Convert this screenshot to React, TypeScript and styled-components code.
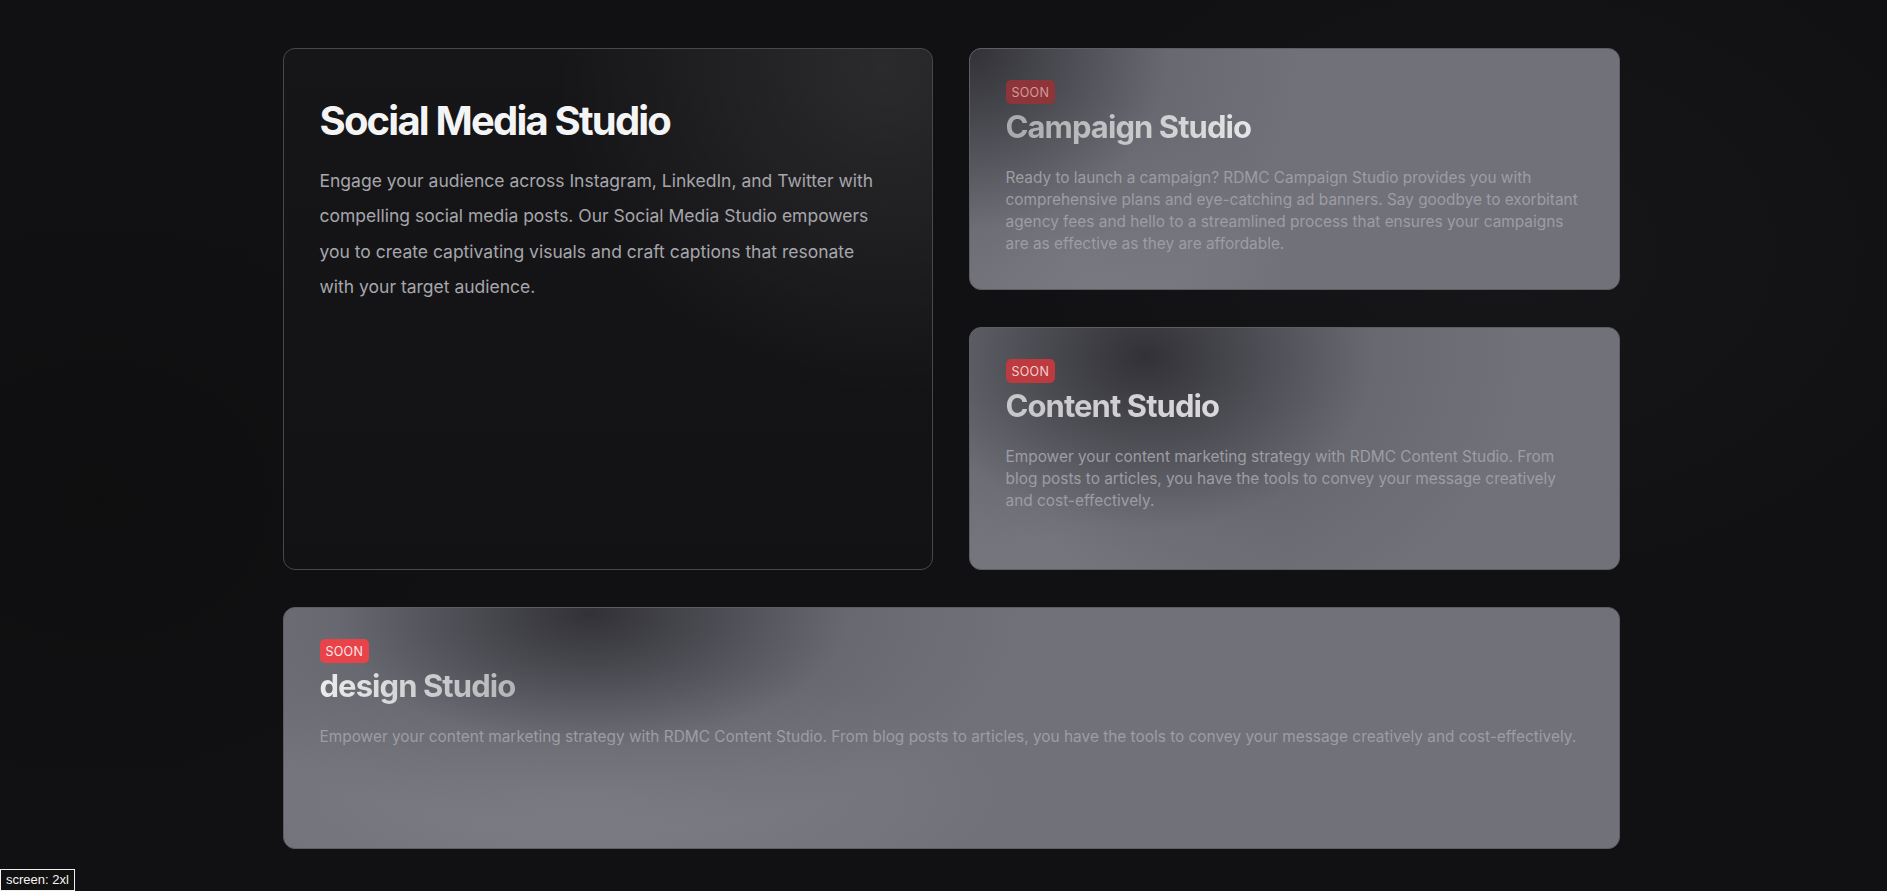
import React from "react";
import styled, { createGlobalStyle } from "styled-components";

const GlobalStyle = createGlobalStyle`
  html, body { margin: 0; padding: 0; }
  body {
    background: #111113;
    font-family: Inter, "Noto Sans", sans-serif;
    -webkit-font-smoothing: antialiased;
  }
  * { box-sizing: border-box; }
`;

const Page = styled.main`
  min-height: 891px;
  padding-top: 48px;
  background:
    radial-gradient(ellipse 700px 500px at 1500px 250px, rgba(255,255,255,0.025), rgba(255,255,255,0) 70%),
    radial-gradient(ellipse 600px 500px at 100px 500px, rgba(0,0,0,0.15), rgba(0,0,0,0) 70%),
    #111113;
`;

const Wrapper = styled.div`
  max-width: 1352px;
  margin: 0 auto;
  padding-left: 15px;
`;

const Grid = styled.div`
  display: grid;
  grid-template-columns: 650px 651px;
  grid-template-rows: 242px 243px 242px;
  column-gap: 36px;
  row-gap: 37px;
  width: 1337px;
`;

const FeatureCard = styled.section`
  grid-column: 1;
  grid-row: 1 / span 2;
  border: 1px solid #48484b;
  border-radius: 12px;
  padding: 47px 36px;
  background:
    radial-gradient(circle 330px at 600px 20px, rgba(255,255,255,0.09), rgba(255,255,255,0) 100%),
    linear-gradient(180deg, #161618 0%, #121214 100%);
`;

const FeatureTitle = styled.h1`
  margin: 0 0 18px;
  font-family: Inter, sans-serif;
  font-weight: 700;
  font-size: 40px;
  line-height: 49px;
  letter-spacing: -0.045em;
  color: #f4f4f5;
`;

const FeatureText = styled.p`
  margin: 0;
  font-size: 17.5px;
  line-height: 35.3px;
  color: #a6a6ac;
  max-width: 560px;
`;

type Spot = { dx: number; dy: number; dw: number; dh: number; lx: number; ly: number; lw: number; lh: number };

const SoonCard = styled.section<{ $s: Spot; $col: string; $row: string }>`
  grid-column: ${(p) => p.$col};
  grid-row: ${(p) => p.$row};
  border: 1px solid #5d5d64;
  border-radius: 12px;
  padding: 31px 36px;
  display: flex;
  flex-direction: column;
  align-items: flex-start;
  background:
    radial-gradient(ellipse ${(p) => p.$s.dw}px ${(p) => p.$s.dh}px at ${(p) => p.$s.dx}px ${(p) => p.$s.dy}px,
      rgba(38,38,43,0.85) 0%,
      rgba(52,52,58,0.6) 30%,
      rgba(85,85,92,0.3) 60%,
      rgba(113,113,122,0) 100%),
    radial-gradient(ellipse ${(p) => p.$s.lw}px ${(p) => p.$s.lh}px at ${(p) => p.$s.lx}px ${(p) => p.$s.ly}px,
      rgba(132,132,140,0.7) 0%,
      rgba(132,132,140,0) 100%),
    #71717a;
`;

const Badge = styled.span<{ $bg: string; $fg: string }>`
  display: inline-flex;
  align-items: center;
  height: 24px;
  padding: 0 6px;
  border-radius: 5px;
  background: ${(p) => p.$bg};
  color: ${(p) => p.$fg};
  font-size: 12.5px;
  letter-spacing: 0.02em;
  text-transform: uppercase;
`;

const CardTitle = styled.h2<{ $from: string; $to: string }>`
  margin: 5px 0 22px;
  font-family: Inter, sans-serif;
  font-weight: 700;
  font-size: 31px;
  line-height: 36px;
  letter-spacing: -0.03em;
  background: linear-gradient(90deg, ${(p) => p.$from} 0%, ${(p) => p.$to} 100%);
  -webkit-background-clip: text;
  background-clip: text;
  color: transparent;
`;

const CardText = styled.p`
  margin: 0;
  font-size: 15.4px;
  line-height: 22px;
  color: #9d9da4;
  max-width: 578px;
`;

const WideText = styled(CardText)`
  max-width: none;
`;

const ScreenTag = styled.div`
  position: fixed;
  left: 0;
  bottom: 0;
  padding: 2px 5px 2px 5px;
  border: 1px solid #f0f0f0;
  background: #111;
  color: #f4f4f4;
  font-family: "Liberation Sans", Arial, sans-serif;
  font-size: 13px;
  line-height: 16px;
`;

const campaignSpot: Spot = { dx: 0, dy: 0, dw: 330, dh: 300, lx: 100, ly: 210, lw: 220, lh: 160 };
const contentSpot: Spot = { dx: 175, dy: 28, dw: 380, dh: 290, lx: 80, ly: 215, lw: 240, lh: 150 };
const designSpot: Spot = { dx: 307, dy: 5, dw: 430, dh: 220, lx: 300, ly: 185, lw: 420, lh: 130 };

export default function App() {
  return (
    <>
      <GlobalStyle />
      <Page>
        <Wrapper>
          <Grid>
            <FeatureCard>
              <FeatureTitle>Social Media Studio</FeatureTitle>
              <FeatureText>
                Engage your audience across Instagram, LinkedIn, and Twitter with compelling social media posts. Our
                Social Media Studio empowers you to create captivating visuals and craft captions that resonate with
                your target audience.
              </FeatureText>
            </FeatureCard>

            <SoonCard $col="2" $row="1" $s={campaignSpot}>
              <Badge $bg="#8d3538" $fg="#d39a9b">Soon</Badge>
              <CardTitle $from="#a8a8ac" $to="#e6e6e8">Campaign Studio</CardTitle>
              <CardText>
                Ready to launch a campaign? RDMC Campaign Studio provides you with comprehensive plans and eye-catching
                ad banners. Say goodbye to exorbitant agency fees and hello to a streamlined process that ensures your
                campaigns are as effective as they are affordable.
              </CardText>
            </SoonCard>

            <SoonCard $col="2" $row="2" $s={contentSpot}>
              <Badge $bg="#bd3a3f" $fg="#f2cfd0">Soon</Badge>
              <CardTitle $from="#c6c6c9" $to="#dadadd">Content Studio</CardTitle>
              <CardText>
                Empower your content marketing strategy with RDMC Content Studio. From blog posts to articles, you have
                the tools to convey your message creatively and cost-effectively.
              </CardText>
            </SoonCard>

            <SoonCard $col="1 / span 2" $row="3" $s={designSpot}>
              <Badge $bg="#e9434a" $fg="#fde7e7">Soon</Badge>
              <CardTitle $from="#ececee" $to="#b4b4b8">design Studio</CardTitle>
              <WideText>
                Empower your content marketing strategy with RDMC Content Studio. From blog posts to articles, you have
                the tools to convey your message creatively and cost-effectively.
              </WideText>
            </SoonCard>
          </Grid>
        </Wrapper>
      </Page>
      <ScreenTag>screen: 2xl</ScreenTag>
    </>
  );
}
